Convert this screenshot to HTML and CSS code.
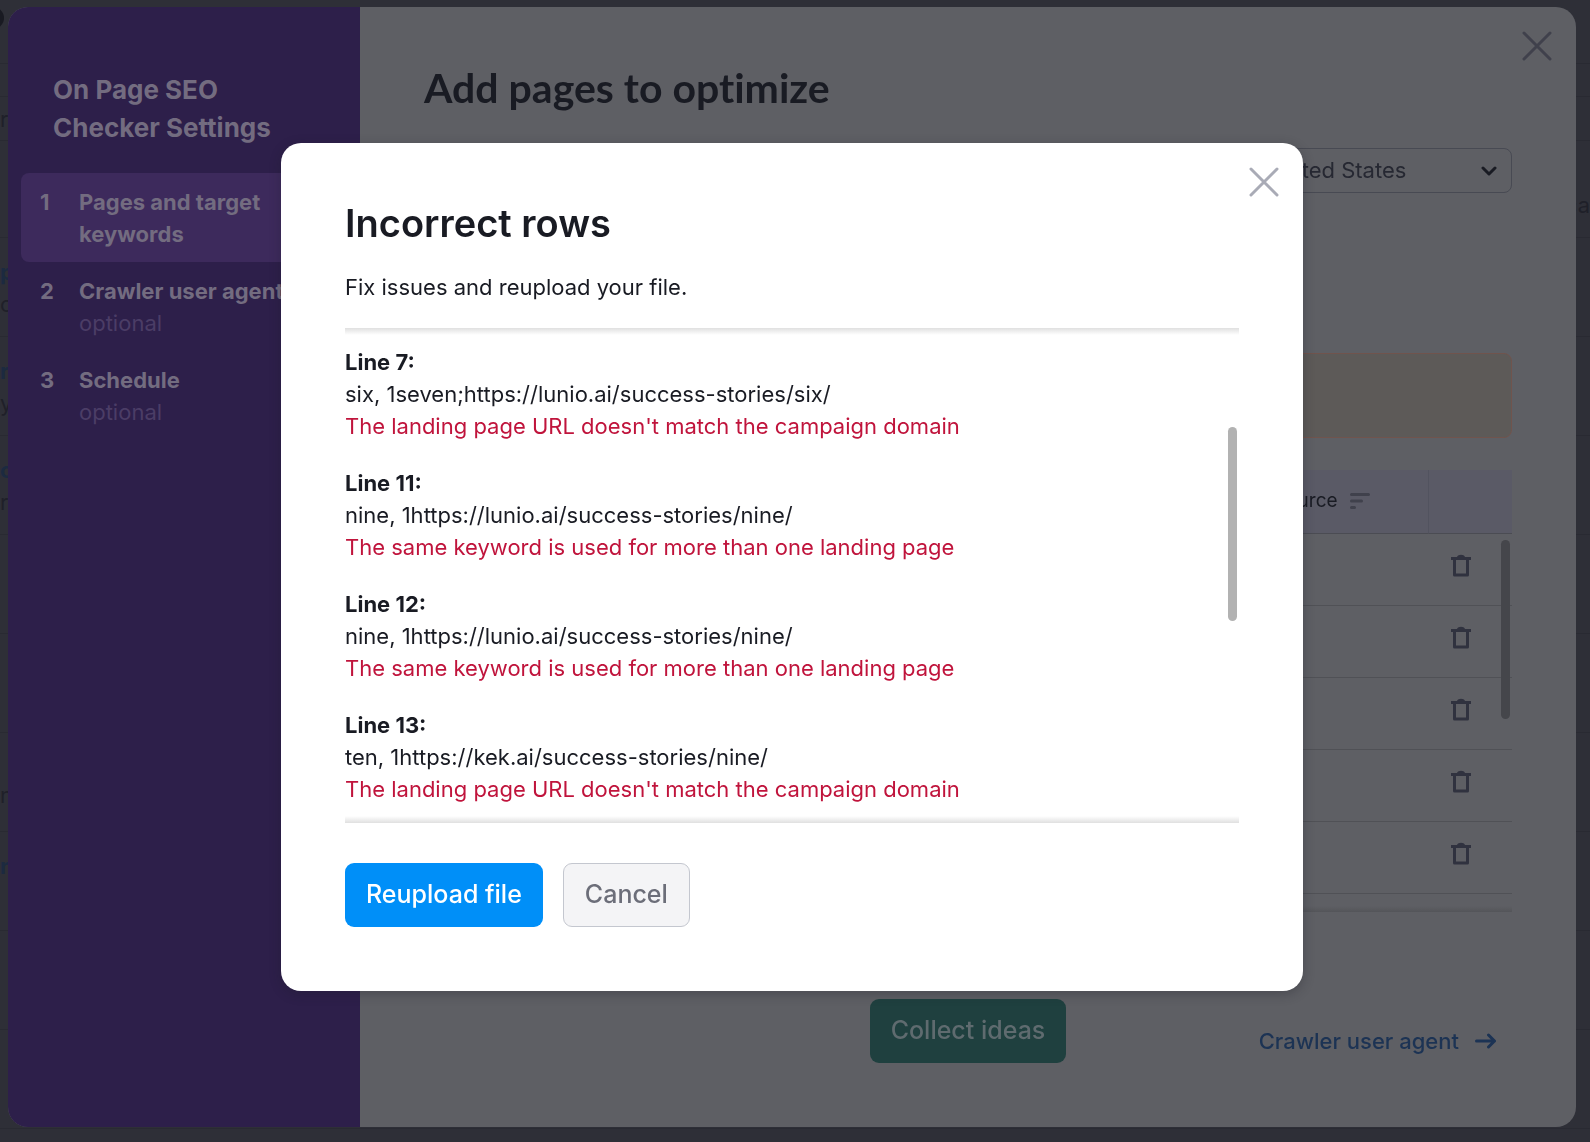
FILE: index.html
```html
<!DOCTYPE html>
<html lang="en">
<head>
  <meta charset="UTF-8">
  <title>On Page SEO Checker – Incorrect rows</title>
  <link rel="stylesheet" href="styles.css">
</head>
<body>
  <svg class="sprite" width="0" height="0" aria-hidden="true">
    <symbol id="close" viewBox="0 0 30 30">
      <path d="M2 2L28 28M28 2L2 28" fill="none" stroke="currentColor" stroke-width="3" stroke-linecap="round"/>
    </symbol>
    <symbol id="trash" viewBox="0 0 20 24">
      <path d="M0 3h6c1-3 7-3 8 0h6v3H0z" fill="currentColor"/>
      <path d="M3.500 5v16h13V5" fill="none" stroke="currentColor" stroke-width="3" stroke-linejoin="round"/>
    </symbol>
  </svg>

  <!-- page behind the settings panel -->
  <div class="page">
    <div class="page-head"><i class="dot"></i></div>
    <div class="page-tabs"></div>
    <div class="page-crumbs"><span>r</span></div>
    <div class="page-tools"><span>ca</span></div>
    <div class="page-row"><b>p</b><span>oc</span></div>
    <div class="page-row"><b>r</b><span>y</span></div>
    <div class="page-row"><b>o</b><span>r</span></div>
    <div class="page-row"></div>
    <div class="page-row"></div>
    <div class="page-row low"><span>n</span></div>
    <div class="page-row"><b>n</b></div>
    <div class="page-row"></div>
    <div class="page-row"></div>
  </div>

  <div class="panel">
    <nav class="sidebar">
      <h2>On Page SEO Checker Settings</h2>
      <ol class="steps">
        <li class="step active"><span class="num">1</span><span>Pages and target keywords</span></li>
        <li class="step"><span class="num">2</span><span>Crawler user agent<small>optional</small></span></li>
        <li class="step"><span class="num">3</span><span>Schedule<small>optional</small></span></li>
      </ol>
    </nav>

    <main class="content">
      <button class="close" aria-label="Close settings"><svg><use href="#close"/></svg></button>
      <h1>Add pages to optimize</h1>
      <div class="location">
        <select class="country" aria-label="Location"><option>United States</option></select>
        <svg class="chevron" viewBox="0 0 16 11"><path d="M2 2l6 6 6-6" fill="none" stroke="currentColor" stroke-width="3" stroke-linecap="round" stroke-linejoin="round"/></svg>
      </div>
      <div class="notice"></div>
      <div class="table-wrap">
        <table>
          <thead>
            <tr>
              <th></th>
              <th class="source">Source
                <svg class="sort" viewBox="0 0 20 16"><path d="M1.500 1.500h17M1.500 8h10M1.500 14.500h3" stroke="currentColor" stroke-width="3" stroke-linecap="round"/></svg>
              </th>
              <th class="actions"></th>
            </tr>
          </thead>
          <tbody>
            <tr><td></td><td></td><td><button class="trash" aria-label="Delete"><svg><use href="#trash"/></svg></button></td></tr>
            <tr><td></td><td></td><td><button class="trash" aria-label="Delete"><svg><use href="#trash"/></svg></button></td></tr>
            <tr><td></td><td></td><td><button class="trash" aria-label="Delete"><svg><use href="#trash"/></svg></button></td></tr>
            <tr><td></td><td></td><td><button class="trash" aria-label="Delete"><svg><use href="#trash"/></svg></button></td></tr>
            <tr><td></td><td></td><td><button class="trash" aria-label="Delete"><svg><use href="#trash"/></svg></button></td></tr>
          </tbody>
        </table>
        <div class="table-thumb"></div>
      </div>
      <div class="footer">
        <button class="btn collect">Collect ideas</button>
        <a class="next" href="#">Crawler user agent
          <svg viewBox="0 0 22 16"><path d="M1.500 8h18M13.500 2l6 6-6 6" fill="none" stroke="currentColor" stroke-width="3" stroke-linecap="round" stroke-linejoin="round"/></svg>
        </a>
      </div>
    </main>
  </div>

  <div class="overlay">
    <div class="modal" role="dialog" aria-labelledby="modalTitle">
      <button class="close" aria-label="Close"><svg><use href="#close"/></svg></button>
      <h2 id="modalTitle">Incorrect rows</h2>
      <p class="hint">Fix issues and reupload your file.</p>
      <div class="rows">
        <div class="row">
          <b>Line 7:</b>
          <p>six, 1seven;https://lunio.ai/success-stories/six/</p>
          <p class="error">The landing page URL doesn't match the campaign domain</p>
        </div>
        <div class="row">
          <b>Line 11:</b>
          <p>nine, 1https://lunio.ai/success-stories/nine/</p>
          <p class="error">The same keyword is used for more than one landing page</p>
        </div>
        <div class="row">
          <b>Line 12:</b>
          <p>nine, 1https://lunio.ai/success-stories/nine/</p>
          <p class="error">The same keyword is used for more than one landing page</p>
        </div>
        <div class="row">
          <b>Line 13:</b>
          <p>ten, 1https://kek.ai/success-stories/nine/</p>
          <p class="error">The landing page URL doesn't match the campaign domain</p>
        </div>
        <div class="rows-thumb"></div>
      </div>
      <div class="buttons">
        <button class="btn primary">Reupload file</button>
        <button class="btn cancel">Cancel</button>
      </div>
    </div>
  </div>
</body>
</html>
```
FILE: styles.css
```css
* {
  box-sizing: border-box;
}
body {
  margin: 0;
  font-family: Inter, "Liberation Sans", sans-serif;
  font-size: 22px;
  line-height: 32px;
  color: #191b23;
  background-color: #2e2f37;
}
h1, h2, p, ol {
  margin: 0;
  padding: 0;
}
button {
  font-family: inherit;
  border: none;
  padding: 0;
  cursor: pointer;
}
.sprite {
  position: absolute;
}

/* page behind */
.page {
  height: 100vh;
  overflow: hidden;
  color: #1f2029;
}
.page b {
  color: #1c2a40;
}
.page-head {
  height: 64px;
  padding-top: 7px;
  border-bottom: 1px solid #292a32;
}
.dot {
  display: block;
  width: 22px;
  height: 22px;
  margin-left: -18px;
  border-radius: 50%;
  background-color: #191a22;
}
.page-tabs {
  height: 33px;
  border-bottom: 1px solid #292a32;
}
.page-crumbs {
  height: 44px;
  padding-top: 6px;
  border-bottom: 1px solid #292a32;
}
.page-tools {
  display: flex;
  align-items: center;
  justify-content: flex-end;
  height: 97px;
  padding-top: 32px;
  border-bottom: 1px solid #292a32;
}
.page-row {
  display: flex;
  flex-direction: column;
  height: 99px;
  padding-top: 18px;
  border-bottom: 1px solid #292a32;
}
.page-row.low {
  padding-top: 46px;
}

/* settings panel */
.panel {
  position: fixed;
  inset: 7px 14px 15px 8px;
  display: flex;
  border-radius: 20px;
  overflow: hidden;
  background-color: #5e5f64;
}
.sidebar {
  width: 352px;
  flex-shrink: 0;
  padding: 64px 13px;
  background-color: #2d1f4a;
  color: #736c80;
}
.sidebar h2 {
  padding: 0 32px;
  margin-bottom: 26px;
  font-size: 26px;
  line-height: 38px;
  font-weight: 700;
}
.steps {
  list-style: none;
}
.step {
  display: flex;
  height: 89px;
  padding: 13px 19px;
  border-radius: 8px;
  font-weight: 700;
  white-space: nowrap;
}
.step.active {
  background-color: #3d2a5c;
  white-space: normal;
}
.num {
  width: 39px;
  flex-shrink: 0;
}
.step small {
  display: block;
  font-size: 22px;
  font-weight: 400;
  color: #4b3d66;
}
.content {
  position: relative;
  flex: 1;
  padding: 57px 64px 64px;
}
.content h1 {
  margin-bottom: 36px;
  font-family: Lato, sans-serif;
  font-size: 41px;
  line-height: 48px;
  font-weight: 700;
  font-variant-ligatures: none;
}
.close {
  position: absolute;
  top: 24px;
  right: 24px;
  background: none;
  color: #a9abb6;
}
.close svg {
  display: block;
  width: 30px;
  height: 30px;
}
.content .close {
  color: #40414c;
}
.location {
  position: relative;
  width: 260px;
  margin-left: auto;
  margin-bottom: 160px;
}
.country {
  display: block;
  width: 100%;
  height: 45px;
  padding: 0 14px 2px;
  appearance: none;
  border: 1px solid #484a53;
  border-radius: 8px;
  background: none;
  font-family: inherit;
  font-size: 22px;
  color: #262832;
}
.chevron {
  position: absolute;
  top: 18px;
  right: 15px;
  width: 16px;
  height: 11px;
  color: #191b23;
}
.notice {
  height: 85px;
  margin-bottom: 32px;
  border: 1px solid #70544d;
  border-radius: 8px;
  background-color: #5d5a58;
}
.table-wrap {
  position: relative;
  height: 442px;
  margin-bottom: 87px;
  background: linear-gradient(to top, #545559, #5e5f64) bottom / 100% 6px no-repeat;
}
table {
  width: 100%;
  table-layout: fixed;
  border-collapse: separate;
  border-spacing: 0;
}
th {
  height: 64px;
  padding: 0 0 2px;
  text-align: left;
  font-size: 19px;
  font-weight: 400;
  background-color: #5a5a66;
  border-bottom: 1px solid #4b4c53;
}
.source {
  width: 180px;
  padding-left: 26px;
}
.actions {
  width: 84px;
  border-left: 1px solid #52535f;
}
.sort {
  width: 20px;
  height: 16px;
  margin-left: 7px;
  vertical-align: -2px;
  color: #40414c;
}
td {
  height: 72px;
  padding: 20px 0 0 23px;
  vertical-align: top;
  border-bottom: 1px solid #505156;
}
.trash {
  display: block;
  background: none;
  color: #30323f;
}
.trash svg {
  display: block;
  width: 20px;
  height: 24px;
}
.table-thumb {
  position: absolute;
  top: 70px;
  right: 2px;
  width: 9px;
  height: 179px;
  border-radius: 5px;
  background-color: #45464b;
}
.footer {
  display: grid;
  grid-template-columns: 1fr auto 1fr;
}
.btn {
  height: 64px;
  padding: 0 21px 2px;
  border-radius: 9px;
  font-size: 25px;
  font-weight: 500;
}
.collect {
  grid-column: 2;
  background-color: #1f403f;
  color: #5f6b6f;
}
.next {
  display: flex;
  align-items: center;
  justify-content: flex-end;
  gap: 16px;
  padding: 20px 15px 0 0;
  color: #1c3354;
  font-weight: 500;
  text-decoration: none;
}
.next svg {
  width: 22px;
  height: 16px;
}

/* incorrect rows dialog */
.overlay {
  position: fixed;
  inset: 7px 14px 15px 8px;
  display: flex;
  align-items: center;
  justify-content: center;
}
.modal {
  position: relative;
  width: 100%;
  max-width: 1022px;
  padding: 56px 64px 64px;
  border-radius: 20px;
  background-color: #fff;
  box-shadow: 0 3px 12px rgba(25, 27, 35, 0.3);
}
.modal h2 {
  margin-bottom: 24px;
  font-size: 38px;
  line-height: 48px;
  font-weight: 600;
}
.hint {
  margin-bottom: 25px;
}
.rows {
  position: relative;
  display: flex;
  flex-direction: column;
  gap: 25px;
  padding: 18px 0;
  margin-bottom: 40px;
  background:
    linear-gradient(#e0e0e0, #fff) top / 100% 7px no-repeat,
    linear-gradient(#fff, #e0e0e0) bottom / 100% 7px no-repeat;
}
.row b {
  display: block;
}
.error {
  color: #c0143c;
}
.rows-thumb {
  position: absolute;
  top: 99px;
  right: 2px;
  width: 9px;
  height: 194px;
  border-radius: 5px;
  background-color: #b2b2b2;
}
.buttons {
  display: flex;
  gap: 20px;
}
.primary {
  background-color: #008ff8;
  color: #fff;
}
.cancel {
  border: 1px solid #c4c7cf;
  background-color: #f4f4f6;
  color: #6c6e79;
}
```
